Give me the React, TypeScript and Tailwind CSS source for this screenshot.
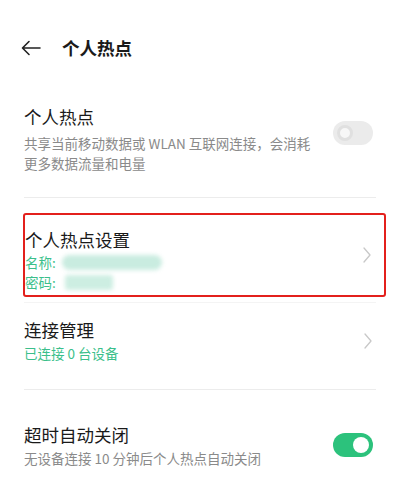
import React from 'react'

const font = { fontFamily: '"Noto Sans CJK SC", "Noto Sans", sans-serif' }

function Chevron() {
  return (
    <svg width="10" height="18" viewBox="0 0 10 18" fill="none">
      <path d="M2 2 L8 9 L2 16" stroke="#c8c8c8" strokeWidth="1.3" strokeLinecap="round" strokeLinejoin="round" />
    </svg>
  )
}

function Toggle({ on }: { on: boolean }) {
  if (on) {
    return (
      <div className="w-[40px] h-[24px] rounded-full bg-[#2cc27c] flex items-center justify-end pr-[4px]">
        <div className="w-[16px] h-[16px] rounded-full bg-white" />
      </div>
    )
  }
  return (
    <div className="w-[40px] h-[24px] rounded-full bg-[#ebebeb] flex items-center pl-[4px]">
      <div className="w-[16px] h-[16px] rounded-full bg-[#f7f7f7] border-[3px] border-[#e0e0e0]" />
    </div>
  )
}

export default function App() {
  return (
    <div className="w-[400px] h-[497px] bg-white overflow-hidden text-[#1a1a1a]" style={font}>
      {/* header */}
      <div className="h-[96px] flex items-center pl-[21px]">
        <svg width="20" height="16" viewBox="0 0 20 16" fill="none">
          <path d="M19 8 H2 M8 1.5 L1.5 8 L8 14.5" stroke="#222" strokeWidth="1.6" strokeLinecap="round" strokeLinejoin="round" />
        </svg>
        <span className="ml-[21px] text-[17.5px] font-bold leading-[24px]">个人热点</span>
      </div>

      {/* hotspot toggle */}
      <div className="pl-[24px] pr-[27px] pt-[9px] pb-[24px] flex items-center">
        <div className="flex-1">
          <div className="text-[17.5px] leading-[24px]">个人热点</div>
          <div className="text-[13.5px] leading-[20px] text-[#8a8a8a] mt-[4px] whitespace-nowrap">
            共享当前移动数据或 WLAN 互联网连接，会消耗
            <br />
            更多数据流量和电量
          </div>
        </div>
        <div className="-mt-[12px]">
          <Toggle on={false} />
        </div>
      </div>
      <div className="mx-[24px] h-px bg-[#ececec]" />

      {/* settings, highlighted */}
      <div className="mt-[15px] ml-[23px] mr-[14px] h-[84px] border-2 border-[#e3201c] rounded-[3px] flex items-center pr-[12px]">
        <div className="flex-1 pt-[12px] pb-[2px]">
          <div className="text-[17.5px] leading-[24px]">个人热点设置</div>
          <div className="flex items-center text-[13.5px] leading-[20px] text-[#3bbf8b]">
            <span>名称:</span>
            <div className="ml-[6px] w-[100px] h-[15px] rounded-full bg-[#c9ece0] blur-[2px]" />
          </div>
          <div className="flex items-center text-[13.5px] leading-[20px] text-[#3bbf8b]">
            <span>密码:</span>
            <div className="ml-[9px] w-[48px] h-[15px] rounded-[3px] bg-[#cdeee2] blur-[2px]" />
          </div>
        </div>
        <Chevron />
      </div>
      <div className="mt-[5px] mx-[24px] h-px bg-[#f4f4f4]" />

      {/* connection management */}
      <div className="pl-[24px] pr-[27px] pt-[15px] pb-[26px] flex items-center">
        <div className="flex-1">
          <div className="text-[17.5px] leading-[24px]">连接管理</div>
          <div className="text-[13.5px] leading-[20px] text-[#3bbf8b] mt-[1px]">已连接 0 台设备</div>
        </div>
        <Chevron />
      </div>
      <div className="mx-[24px] h-px bg-[#ececec]" />

      {/* auto close */}
      <div className="pl-[24px] pr-[27px] pt-[33px] flex items-center">
        <div className="flex-1">
          <div className="text-[17.5px] leading-[24px]">超时自动关闭</div>
          <div className="text-[13.5px] leading-[20px] text-[#8a8a8a] mt-[1px]">无设备连接 10 分钟后个人热点自动关闭</div>
        </div>
        <div className="-mt-[2px]">
          <Toggle on={true} />
        </div>
      </div>
    </div>
  )
}
